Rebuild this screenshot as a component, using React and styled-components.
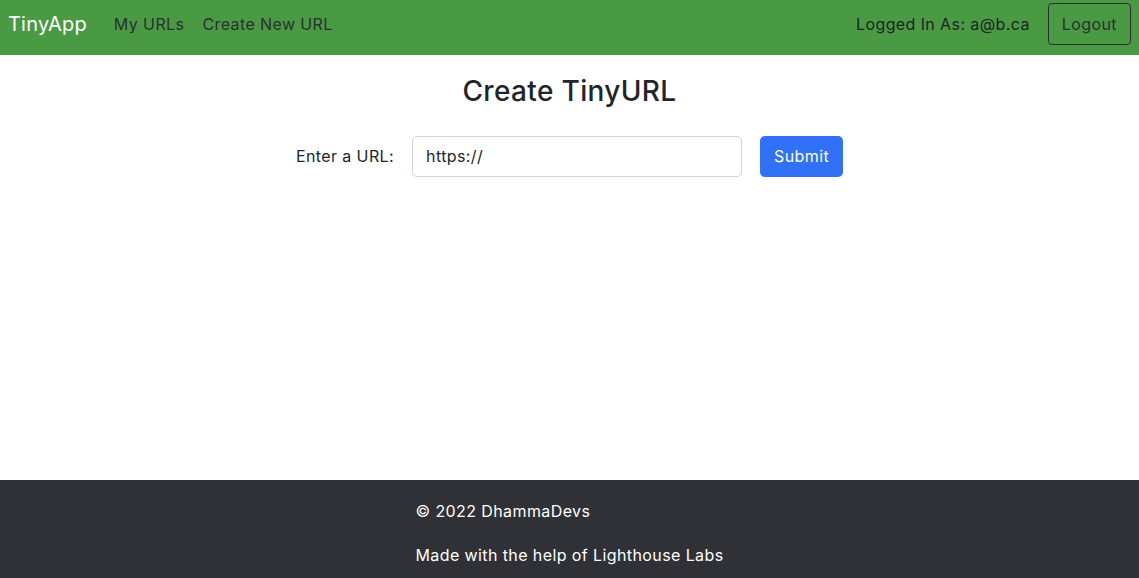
import React from 'react';
import styled, { createGlobalStyle } from 'styled-components';

const GlobalStyle = createGlobalStyle`
    body {
        margin: 0;
        font-family: Inter, "Noto Sans", sans-serif;
        font-size: 16px;
        letter-spacing: 0.4px;
        color: #212529;
        background: #fff;
    }
`

const App = () => {
    return (
        <>
            <GlobalStyle />
            <Navbar>
                <Brand>TinyApp</Brand>
                <NavLinks>
                    <NavLink>My URLs</NavLink>
                    <NavLink>Create New URL</NavLink>
                </NavLinks>
                <UserArea>
                    <UserText>Logged In As: a@b.ca</UserText>
                    <OutlineButton>Logout</OutlineButton>
                </UserArea>
            </Navbar>
            <Main>
                <Title>Create TinyURL</Title>
                <Form>
                    <Label>Enter a URL:</Label>
                    <Input type="text" defaultValue="https://" />
                    <SubmitButton>Submit</SubmitButton>
                </Form>
            </Main>
            <Footer>
                <FooterBlock>
                    <FooterText>© 2022 DhammaDevs</FooterText>
                    <FooterText>Made with the help of Lighthouse Labs</FooterText>
                </FooterBlock>
            </Footer>
        </>
    );
};

export default App;

const Navbar = styled.nav`
    background: #4a9a44;
    height: 55px;
    display: flex;
    align-items: center;
    padding: 0 8px 8px;
    box-sizing: border-box;
`
const Brand = styled.div`
    color: #fff;
    font-size: 20px;
    letter-spacing: 0.2px;
    margin-right: 27px;
`
const NavLinks = styled.div`
    display: flex;
    gap: 18px;
    flex: 1;
`
const NavLink = styled.a`
    color: #2b2f33;
    font-size: 16px;
`
const UserArea = styled.div`
    display: flex;
    align-items: center;
    gap: 18px;
`
const UserText = styled.span`
    color: #1f2326;
    font-size: 16px;
`
const OutlineButton = styled.button`
    font-family: inherit;
    font-size: 16px;
    letter-spacing: 0.4px;
    color: #2b2f33;
    background: transparent;
    border: 1px solid #2b2f33;
    border-radius: 4px;
    height: 42px;
    padding: 0 13px;
`
const Main = styled.main`
    min-height: 425px;
    display: flex;
    flex-direction: column;
    align-items: center;
`
const Title = styled.h1`
    font-size: 28px;
    font-weight: 500;
    letter-spacing: 0.35px;
    margin: 20px 0 27px;
    line-height: 1.2;
`
const Form = styled.form`
    display: flex;
    align-items: center;
    gap: 18px;
`
const Label = styled.label`
    font-size: 16px;
`
const Input = styled.input`
    width: 330px;
    height: 41px;
    box-sizing: border-box;
    border: 1px solid #ced4da;
    border-radius: 5px;
    padding: 0 13px;
    font-family: inherit;
    font-size: 16px;
    letter-spacing: 0.4px;
    color: #212529;
`
const SubmitButton = styled.button`
    height: 41px;
    padding: 0 14px;
    background: #3071f6;
    border: none;
    border-radius: 5px;
    color: #fff;
    font-family: inherit;
    font-size: 16px;
    letter-spacing: 0.4px;
`
const Footer = styled.footer`
    background: #2f3136;
    display: flex;
    justify-content: center;
    padding: 19px 0 24px;
`
const FooterBlock = styled.div`
    display: flex;
    flex-direction: column;
    gap: 20px;
`
const FooterText = styled.p`
    margin: 0;
    color: #fff;
    line-height: 24px;
`
